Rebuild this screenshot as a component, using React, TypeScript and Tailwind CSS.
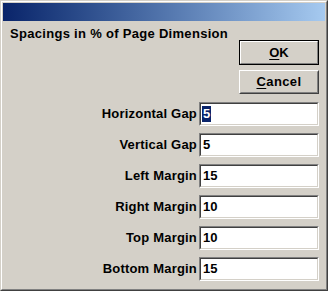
const fields = [
  { label: "Horizontal Gap", value: "5", selected: true },
  { label: "Vertical Gap", value: "5" },
  { label: "Left Margin", value: "15" },
  { label: "Right Margin", value: "10" },
  { label: "Top Margin", value: "10" },
  { label: "Bottom Margin", value: "15" },
];

const font = "font-['Liberation_Sans',Arial,sans-serif] font-bold";

const App = () => {
  return (
    <div className="w-[328px] h-[291px] bg-[#d4d0c8]">
      <div className="h-full w-full border border-t-[#d4d0c8] border-l-[#d4d0c8] border-r-[#404040] border-b-[#404040]">
        <div className="h-full w-full flex flex-col border border-t-white border-l-white border-r-[#808080] border-b-[#808080] p-px">
          <div className="h-[18px] shrink-0 bg-gradient-to-r from-[#0a246a] to-[#a6caf0]" />
          <div className={`flex flex-col px-[6px] text-[13px] leading-[16px] text-black ${font}`}>
            <div className="flex justify-between items-start">
              <h1 className="mt-[5px] ml-[1px] text-[13px] tracking-[0.3px]">
                Spacings in % of Page Dimension
              </h1>
              <div className="mt-[19px] flex flex-col gap-[5px]">
                <button className="w-[80px] h-[25px] border border-black bg-[#d4d0c8]">
                  <span className="flex h-full w-full items-center justify-center border border-t-white border-l-white border-r-[#808080] border-b-[#808080]">
                    <span className="underline underline-offset-2">O</span>K
                  </span>
                </button>
                <button className="w-[80px] h-[24px] border border-t-white border-l-white border-r-[#404040] border-b-[#404040] bg-[#d4d0c8]">
                  <span className="flex h-full w-full items-center justify-center border border-t-[#d4d0c8] border-l-[#d4d0c8] border-r-[#808080] border-b-[#808080] tracking-[0.4px]">
                    <span className="underline underline-offset-2">C</span>ancel
                  </span>
                </button>
              </div>
            </div>
            <div className="mt-[8px] flex flex-col gap-[7px]">
              {fields.map((f) => (
                <div key={f.label} className="flex items-center justify-end gap-[2px]">
                  <span className="tracking-[0.2px]">{f.label}</span>
                  <div className="w-[120px] h-[24px] border border-t-[#808080] border-l-[#808080] border-r-white border-b-white">
                    <div className="h-full w-full flex items-center bg-white border border-t-[#404040] border-l-[#404040] border-r-[#d4d0c8] border-b-[#d4d0c8] pl-px">
                      {f.selected ? (
                        <span className="bg-[#0a246a] text-white px-px">{f.value}</span>
                      ) : (
                        <span className="px-px">{f.value}</span>
                      )}
                    </div>
                  </div>
                </div>
              ))}
            </div>
          </div>
        </div>
      </div>
    </div>
  );
};

export default App;
